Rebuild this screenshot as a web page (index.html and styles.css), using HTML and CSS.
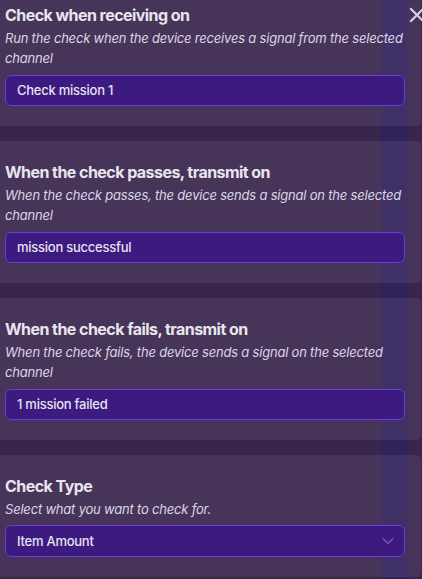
FILE: index.html
```html
<!DOCTYPE html>
<html lang="en">
<head>
<meta charset="utf-8">
<title>Checker settings</title>
<link rel="stylesheet" href="styles.css">
</head>
<body>
<div class="panel">
  <section class="card">
    <h2 class="title">Check when receiving on</h2>
    <p class="desc">Run the check when the device receives a signal from the selected channel</p>
    <div class="field">Check mission 1</div>
  </section>
  <section class="card">
    <h2 class="title">When the check passes, transmit on</h2>
    <p class="desc">When the check passes, the device sends a signal on the selected channel</p>
    <div class="field">mission successful</div>
  </section>
  <section class="card">
    <h2 class="title">When the check fails, transmit on</h2>
    <p class="desc">When the check fails, the device sends a signal on the selected channel</p>
    <div class="field">1 mission failed</div>
  </section>
  <section class="card">
    <h2 class="title">Check Type</h2>
    <p class="desc">Select what you want to check for.</p>
    <div class="field select">
      <span>Item Amount</span>
      <svg class="chev" width="12" height="8" viewBox="0 0 12 8"><path d="M1 1.5 L6 6.5 L11 1.5" fill="none" stroke="#7d5fb0" stroke-width="1.2"/></svg>
    </div>
  </section>
</div>
<button class="close" aria-label="Close">
  <svg width="16" height="16" viewBox="0 0 16 16"><path d="M2 2 L14 14 M14 2 L2 14" stroke="#d6d0e2" stroke-width="2.2" stroke-linecap="square"/></svg>
</button>
</body>
</html>
```
FILE: styles.css
```css
html, body {
  margin: 0;
  padding: 0;
  height: 100%;
}
body {
  font-family: Inter, "Noto Sans", sans-serif;
  background:
    linear-gradient(to right, rgba(0,0,0,0) 0, rgba(0,0,0,0) 378px, rgba(40,30,110,0.45) 384px, rgba(40,30,110,0.45) 404px, rgba(0,0,0,0) 412px),
    #39264d;
  overflow: hidden;
  position: relative;
}
.panel {
  display: flex;
  flex-direction: column;
  gap: 15px;
  margin-top: -16px;
  width: 421px;
}
.card {
  background: rgba(255, 255, 255, 0.07);
  border-radius: 0 5px 5px 0;
  padding: 21px 16px 20px 5px;
}
.title {
  margin: 0;
  font-size: 16px;
  line-height: 20px;
  font-weight: 700;
  color: #e9e5ee;
  letter-spacing: -0.55px;
}
.desc {
  margin: 3px 0 0;
  font-size: 13px;
  line-height: 20px;
  font-style: italic;
  color: #dcd5e6;
  letter-spacing: -0.2px;
}
.field {
  margin-top: 7px;
  height: 29px;
  box-sizing: content-box;
  border: 1px solid #6a3bd6;
  border-radius: 6px;
  background: #3d1a7f;
  color: #e6e2ef;
  font-size: 13px;
  font-weight: 500;
  line-height: 29px;
  padding: 0 11px;
  letter-spacing: -0.25px;
}
.select {
  display: flex;
  align-items: center;
  justify-content: space-between;
  height: 30px;
  margin-top: 6px;
}
.chev {
  display: block;
  margin-right: -1px;
}
.close {
  position: absolute;
  top: 7px;
  right: -3px;
  background: none;
  border: 0;
  padding: 0;
  width: 16px;
  height: 16px;
}
.close svg { display: block; }
```
